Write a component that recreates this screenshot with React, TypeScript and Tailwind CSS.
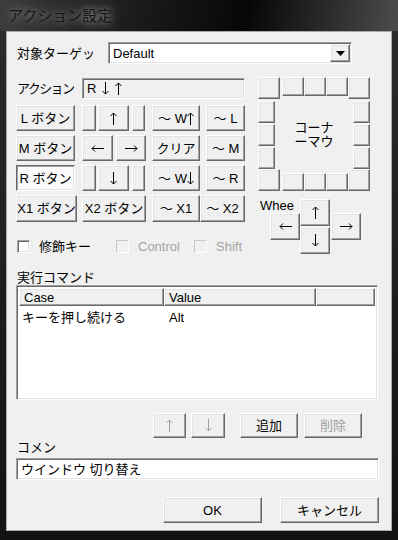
import React from 'react';

const raised =
  'bg-[#f0f0f0] border border-t-white border-l-white border-r-[#696969] border-b-[#696969] shadow-[inset_-1px_-1px_0_#a0a0a0,inset_1px_1px_0_#e3e3e3]';
const pressed =
  'bg-[#fbfbfb] border border-t-[#696969] border-l-[#696969] border-r-white border-b-white shadow-[inset_1px_1px_0_#a0a0a0,inset_-1px_-1px_0_#e3e3e3]';
const sunken =
  'border border-t-[#a0a0a0] border-l-[#a0a0a0] border-r-white border-b-white shadow-[inset_1px_1px_0_#696969,inset_-1px_-1px_0_#e3e3e3]';

interface BtnProps {
  className: string;
  children?: React.ReactNode;
  disabled?: boolean;
  down?: boolean;
}

function Btn({ className, children, disabled, down }: BtnProps) {
  return (
    <div
      className={`${down ? pressed : raised} ${className} flex items-center justify-center shrink-0 whitespace-nowrap overflow-hidden leading-none ${
        disabled ? 'text-[#a0a0a0]' : 'text-black'
      }`}
    >
      {children}
    </div>
  );
}

type Dir = 'up' | 'down' | 'left' | 'right';

// thin arrow glyph, like the dialog font's ↑ ↓ ← →
function Ar({ d, className = '' }: { d: Dir; className?: string }) {
  if (d === 'up' || d === 'down') {
    return (
      <svg width="7" height="13" viewBox="0 0 7 13" className={`shrink-0 ${className}`}>
        <path
          d={d === 'up' ? 'M3.5 1V13M0.5 4L3.5 1L6.5 4' : 'M3.5 0V12M0.5 9L3.5 12L6.5 9'}
          stroke="currentColor"
          strokeWidth="1"
          fill="none"
        />
      </svg>
    );
  }
  return (
    <svg width="13" height="7" viewBox="0 0 13 7" className={`shrink-0 ${className}`}>
      <path
        d={d === 'left' ? 'M1 3.5H13M4 0.5L1 3.5L4 6.5' : 'M0 3.5H12M9 0.5L12 3.5L9 6.5'}
        stroke="currentColor"
        strokeWidth="1"
        fill="none"
      />
    </svg>
  );
}

function Check({ label, disabled }: { label: string; disabled?: boolean }) {
  return (
    <div className="flex items-center">
      <div
        className={`w-[13px] h-[13px] ${
          disabled
            ? 'border border-t-[#c8c8c8] border-l-[#c8c8c8] border-r-white border-b-white bg-[#f0f0f0]'
            : `${sunken} bg-white`
        }`}
      />
      <span className={`ml-[9px] ${disabled ? 'text-[#a3a3a3]' : 'text-black'}`}>{label}</span>
    </div>
  );
}

export default function App() {
  return (
    <div className="w-[398px] h-[540px] flex flex-col bg-linear-to-b from-[#2c2c2c] to-[#121212] text-[13px] leading-[15px] font-[family-name:'Liberation_Sans','Noto_Sans_CJK_JP',sans-serif] overflow-hidden select-none">
      {/* title bar */}
      <div className="h-[31px] shrink-0 flex items-center pl-[8px] bg-[linear-gradient(100deg,#3e3e3e_0%,#1a1a1a_35%,#070707_62%,#4c4c4c_100%)]">
        <span className="text-[15px] text-[#161616] [text-shadow:0_0_6px_#8a8a8a,0_0_12px_#6a6a6a,0_0_16px_#5a5a5a]">
          アクション設定
        </span>
      </div>

      <div className="flex-1 flex pl-[6px] pr-[6px] pb-[9px]">
        <div className="flex-1 flex flex-col bg-[#f0f0f0] border border-[#a8a8a8] pl-[9px] pt-[10px] text-black">
          {/* target */}
          <div className="flex items-center h-[22px]">
            <span className="w-[92px] pl-[1px]">対象ターゲッ</span>
            <div className={`${sunken} bg-white w-[244px] h-[22px] flex items-center pl-[4px] pr-[1px]`}>
              <span className="flex-1">Default</span>
              <div className={`${raised} w-[20px] h-[18px] flex items-center justify-center`}>
                <svg width="9" height="5" viewBox="0 0 9 5">
                  <path d="M0 0h9L4.5 5z" fill="#000" />
                </svg>
              </div>
            </div>
          </div>

          <div className="flex mt-[13px]">
            {/* left panel */}
            <div className="w-[229px] flex flex-col pt-[1px]">
              <div className="flex items-center h-[21px]">
                <span className="w-[66px] pl-[1px] tracking-[-1.6px]">アクション</span>
                <div className={`${sunken} bg-[#f0f0f0] w-[163px] h-[21px] flex items-center pl-[4px]`}>
                  R <Ar d="down" className="ml-[6px]" /> <Ar d="up" className="ml-[6px]" />
                </div>
              </div>

              <div className="flex mt-[6px] h-[26px]">
                <Btn className="w-[59px] h-[26px]">L ボタン</Btn>
                <Btn className="ml-[7px] w-[14px] h-[26px]" />
                <Btn className="ml-[2px] w-[31px] h-[26px]"><Ar d="up" /></Btn>
                <Btn className="ml-[3px] w-[13px] h-[26px]" />
                <Btn className="ml-[7px] w-[48px] h-[26px]">～ W<Ar d="up" /></Btn>
                <Btn className="ml-[6px] w-[39px] h-[26px]">～ L</Btn>
              </div>
              <div className="flex mt-[4px] h-[26px]">
                <Btn className="w-[59px] h-[26px]">M ボタン</Btn>
                <Btn className="ml-[7px] w-[31px] h-[26px]"><Ar d="left" /></Btn>
                <Btn className="ml-[3px] w-[30px] h-[26px]"><Ar d="right" /></Btn>
                <Btn className="ml-[6px] w-[48px] h-[26px]">クリア</Btn>
                <Btn className="ml-[6px] w-[39px] h-[26px]">～ M</Btn>
              </div>
              <div className="flex mt-[4px] h-[26px]">
                <Btn down className="w-[59px] h-[26px]">R ボタン</Btn>
                <Btn className="ml-[7px] w-[14px] h-[26px]" />
                <Btn className="ml-[2px] w-[31px] h-[26px]"><Ar d="down" /></Btn>
                <Btn className="ml-[3px] w-[13px] h-[26px]" />
                <Btn className="ml-[7px] w-[48px] h-[26px]">～ W<Ar d="down" /></Btn>
                <Btn className="ml-[6px] w-[39px] h-[26px]">～ R</Btn>
              </div>
              <div className="flex mt-[4px] h-[27px]">
                <Btn className="w-[61px] h-[27px]">X1 ボタン</Btn>
                <Btn className="ml-[5px] w-[64px] h-[27px]">X2 ボタン</Btn>
                <Btn className="ml-[6px] w-[48px] h-[27px]">～ X1</Btn>
                <Btn className="w-[45px] h-[27px]">～ X2</Btn>
              </div>

              <div className="flex items-center mt-[17px] pl-[1px]">
                <div className="w-[99px]">
                  <Check label="修飾キー" />
                </div>
                <div className="w-[78px]">
                  <Check label="Control" disabled />
                </div>
                <Check label="Shift" disabled />
              </div>
            </div>

            {/* corner mouse */}
            <div className="ml-[13px] w-[112px] flex flex-col">
              <div className="flex items-start">
                <Btn className="w-[22px] h-[22px]" />
                <Btn className="ml-[2px] w-[22px] h-[19px]" />
                <Btn className="w-[22px] h-[19px]" />
                <Btn className="w-[22px] h-[19px]" />
                <Btn className="w-[22px] h-[22px]" />
              </div>
              <div className="flex h-[70px]">
                <div className="flex flex-col gap-[1px] pt-[2px]">
                  <Btn className="w-[17px] h-[22px]" />
                  <Btn className="w-[17px] h-[22px]" />
                  <Btn className="w-[17px] h-[22px]" />
                </div>
                <div className="flex-1 flex items-center justify-center text-center leading-[14px] pt-[1px]">
                  コーナ
                  <br />
                  ーマウ
                </div>
                <div className="flex flex-col gap-[1px] pt-[2px]">
                  <Btn className="w-[17px] h-[22px]" />
                  <Btn className="w-[17px] h-[22px]" />
                  <Btn className="w-[17px] h-[22px]" />
                </div>
              </div>
              <div className="flex items-end">
                <Btn className="w-[22px] h-[22px]" />
                <Btn className="ml-[2px] w-[22px] h-[18px]" />
                <Btn className="w-[22px] h-[18px]" />
                <Btn className="w-[22px] h-[18px]" />
                <Btn className="w-[22px] h-[22px]" />
              </div>

              {/* wheel */}
              <div className="flex mt-[8px]">
                <div className="w-[42px] flex flex-col">
                  <span className="pl-[2px] h-[14px] leading-[14px]">Whee</span>
                  <Btn className="ml-[12px] w-[30px] h-[27px]"><Ar d="left" /></Btn>
                </div>
                <div className="flex flex-col gap-[1px]">
                  <Btn className="w-[30px] h-[27px]"><Ar d="up" /></Btn>
                  <Btn className="w-[30px] h-[27px]"><Ar d="down" /></Btn>
                </div>
                <Btn className="ml-[1px] mt-[14px] w-[30px] h-[27px]"><Ar d="right" /></Btn>
              </div>
            </div>
          </div>

          {/* command list */}
          <span className="mt-[16px] pl-[1px] h-[15px]">実行コマンド</span>
          <div className={`${sunken} bg-white w-[362px] h-[115px] flex flex-col p-[2px] pb-0`}>
            <div className="flex h-[18px] shrink-0">
              <div className={`${raised} w-[145px] h-[18px] flex items-center pl-[4px]`}>Case</div>
              <div className={`${raised} w-[152px] h-[18px] flex items-center pl-[4px]`}>Value</div>
              <div className={`${raised} flex-1 h-[18px]`} />
            </div>
            <div className="flex items-center h-[17px] mt-[3px]">
              <span className="w-[145px] pl-[3px]">キーを押し続ける</span>
              <span className="pl-[5px]">Alt</span>
            </div>
          </div>

          <div className="flex mt-[13px] h-[25px]">
            <Btn disabled className="ml-[137px] w-[33px] h-[25px]"><Ar d="up" /></Btn>
            <Btn disabled className="ml-[5px] w-[34px] h-[25px]"><Ar d="down" /></Btn>
            <Btn className="ml-[15px] w-[58px] h-[25px]">追加</Btn>
            <Btn disabled className="ml-[6px] w-[58px] h-[25px]">削除</Btn>
          </div>

          <span className="mt-[2px] pl-[1px] h-[15px]">コメン</span>
          <div className={`${sunken} bg-white mt-[3px] w-[363px] h-[22px] flex items-center pl-[4px]`}>
            ウインドウ 切り替え
          </div>

          <div className="flex mt-[17px]">
            <Btn className="ml-[147px] w-[99px] h-[26px]">OK</Btn>
            <Btn className="ml-[18px] w-[99px] h-[26px]">キャンセル</Btn>
          </div>
        </div>
      </div>
    </div>
  );
}
